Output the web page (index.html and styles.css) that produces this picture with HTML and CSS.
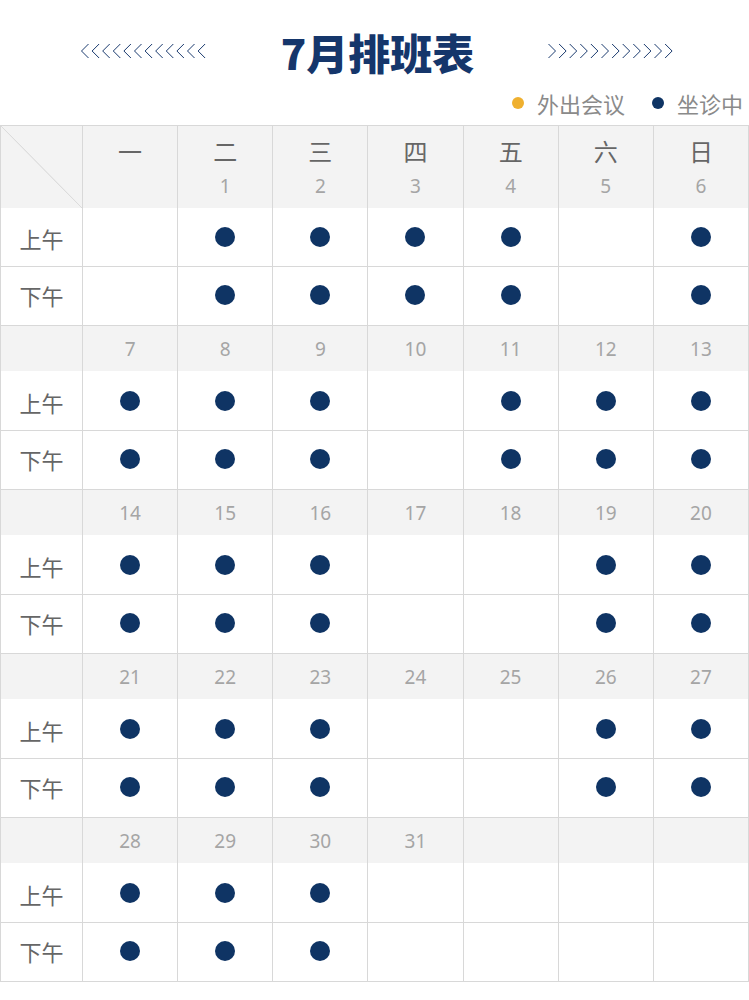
FILE: index.html
```html
<!DOCTYPE html>
<html lang="zh-CN">
<head>
<meta charset="utf-8">
<link rel="stylesheet" href="styles.css">
<title>7月排班表</title>
</head>
<body>
<div class="page">
  <header class="top">
    <svg class="chev" width="126" height="16" viewBox="0 0 126 16">
      <g fill="none" stroke="#1a3a6e" stroke-width="1">
        <polyline points="7.5,1 0.5,8 7.5,15"/>
        <polyline points="18.1,1 11.1,8 18.1,15"/>
        <polyline points="28.7,1 21.7,8 28.7,15"/>
        <polyline points="39.3,1 32.3,8 39.3,15"/>
        <polyline points="49.9,1 42.9,8 49.9,15"/>
        <polyline points="60.5,1 53.5,8 60.5,15"/>
        <polyline points="71.1,1 64.1,8 71.1,15"/>
        <polyline points="81.7,1 74.7,8 81.7,15"/>
        <polyline points="92.3,1 85.3,8 92.3,15"/>
        <polyline points="102.9,1 95.9,8 102.9,15"/>
        <polyline points="113.5,1 106.5,8 113.5,15"/>
        <polyline points="124.1,1 117.1,8 124.1,15"/>
      </g>
    </svg>
    <h1 class="title">7月排班表</h1>
    <svg class="chev" width="126" height="16" viewBox="0 0 126 16">
      <g fill="none" stroke="#1a3a6e" stroke-width="1">
        <polyline points="0.5,1 7.5,8 0.5,15"/>
        <polyline points="11.1,1 18.1,8 11.1,15"/>
        <polyline points="21.7,1 28.7,8 21.7,15"/>
        <polyline points="32.3,1 39.3,8 32.3,15"/>
        <polyline points="42.9,1 49.9,8 42.9,15"/>
        <polyline points="53.5,1 60.5,8 53.5,15"/>
        <polyline points="64.1,1 71.1,8 64.1,15"/>
        <polyline points="74.7,1 81.7,8 74.7,15"/>
        <polyline points="85.3,1 92.3,8 85.3,15"/>
        <polyline points="95.9,1 102.9,8 95.9,15"/>
        <polyline points="106.5,1 113.5,8 106.5,15"/>
        <polyline points="117.1,1 124.1,8 117.1,15"/>
      </g>
    </svg>
  </header>

  <div class="legend">
    <span class="legend-item"><i class="ldot ldot-out"></i>外出会议</span>
    <span class="legend-item"><i class="ldot ldot-in"></i>坐诊中</span>
  </div>

  <div class="grid">
    <!-- header row -->
    <div class="cell head corner"></div>
    <div class="cell head"><span class="wd">一</span><span class="dn">&nbsp;</span></div>
    <div class="cell head"><span class="wd">二</span><span class="dn">1</span></div>
    <div class="cell head"><span class="wd">三</span><span class="dn">2</span></div>
    <div class="cell head"><span class="wd">四</span><span class="dn">3</span></div>
    <div class="cell head"><span class="wd">五</span><span class="dn">4</span></div>
    <div class="cell head"><span class="wd">六</span><span class="dn">5</span></div>
    <div class="cell head"><span class="wd">日</span><span class="dn">6</span></div>

    <div class="cell am label">上午</div>
    <div class="cell am"></div>
    <div class="cell am"><i class="dot"></i></div>
    <div class="cell am"><i class="dot"></i></div>
    <div class="cell am"><i class="dot"></i></div>
    <div class="cell am"><i class="dot"></i></div>
    <div class="cell am"></div>
    <div class="cell am"><i class="dot"></i></div>

    <div class="cell pm label">下午</div>
    <div class="cell pm"></div>
    <div class="cell pm"><i class="dot"></i></div>
    <div class="cell pm"><i class="dot"></i></div>
    <div class="cell pm"><i class="dot"></i></div>
    <div class="cell pm"><i class="dot"></i></div>
    <div class="cell pm"></div>
    <div class="cell pm"><i class="dot"></i></div>

    <!-- week 2 -->
    <div class="cell date"></div>
    <div class="cell date">7</div>
    <div class="cell date">8</div>
    <div class="cell date">9</div>
    <div class="cell date">10</div>
    <div class="cell date">11</div>
    <div class="cell date">12</div>
    <div class="cell date">13</div>

    <div class="cell am label">上午</div>
    <div class="cell am"><i class="dot"></i></div>
    <div class="cell am"><i class="dot"></i></div>
    <div class="cell am"><i class="dot"></i></div>
    <div class="cell am"></div>
    <div class="cell am"><i class="dot"></i></div>
    <div class="cell am"><i class="dot"></i></div>
    <div class="cell am"><i class="dot"></i></div>

    <div class="cell pm label">下午</div>
    <div class="cell pm"><i class="dot"></i></div>
    <div class="cell pm"><i class="dot"></i></div>
    <div class="cell pm"><i class="dot"></i></div>
    <div class="cell pm"></div>
    <div class="cell pm"><i class="dot"></i></div>
    <div class="cell pm"><i class="dot"></i></div>
    <div class="cell pm"><i class="dot"></i></div>

    <!-- week 3 -->
    <div class="cell date"></div>
    <div class="cell date">14</div>
    <div class="cell date">15</div>
    <div class="cell date">16</div>
    <div class="cell date">17</div>
    <div class="cell date">18</div>
    <div class="cell date">19</div>
    <div class="cell date">20</div>

    <div class="cell am label">上午</div>
    <div class="cell am"><i class="dot"></i></div>
    <div class="cell am"><i class="dot"></i></div>
    <div class="cell am"><i class="dot"></i></div>
    <div class="cell am"></div>
    <div class="cell am"></div>
    <div class="cell am"><i class="dot"></i></div>
    <div class="cell am"><i class="dot"></i></div>

    <div class="cell pm label">下午</div>
    <div class="cell pm"><i class="dot"></i></div>
    <div class="cell pm"><i class="dot"></i></div>
    <div class="cell pm"><i class="dot"></i></div>
    <div class="cell pm"></div>
    <div class="cell pm"></div>
    <div class="cell pm"><i class="dot"></i></div>
    <div class="cell pm"><i class="dot"></i></div>

    <!-- week 4 -->
    <div class="cell date"></div>
    <div class="cell date">21</div>
    <div class="cell date">22</div>
    <div class="cell date">23</div>
    <div class="cell date">24</div>
    <div class="cell date">25</div>
    <div class="cell date">26</div>
    <div class="cell date">27</div>

    <div class="cell am label">上午</div>
    <div class="cell am"><i class="dot"></i></div>
    <div class="cell am"><i class="dot"></i></div>
    <div class="cell am"><i class="dot"></i></div>
    <div class="cell am"></div>
    <div class="cell am"></div>
    <div class="cell am"><i class="dot"></i></div>
    <div class="cell am"><i class="dot"></i></div>

    <div class="cell pm label">下午</div>
    <div class="cell pm"><i class="dot"></i></div>
    <div class="cell pm"><i class="dot"></i></div>
    <div class="cell pm"><i class="dot"></i></div>
    <div class="cell pm"></div>
    <div class="cell pm"></div>
    <div class="cell pm"><i class="dot"></i></div>
    <div class="cell pm"><i class="dot"></i></div>

    <!-- week 5 -->
    <div class="cell date"></div>
    <div class="cell date">28</div>
    <div class="cell date">29</div>
    <div class="cell date">30</div>
    <div class="cell date">31</div>
    <div class="cell date"></div>
    <div class="cell date"></div>
    <div class="cell date"></div>

    <div class="cell am label">上午</div>
    <div class="cell am"><i class="dot"></i></div>
    <div class="cell am"><i class="dot"></i></div>
    <div class="cell am"><i class="dot"></i></div>
    <div class="cell am"></div>
    <div class="cell am"></div>
    <div class="cell am"></div>
    <div class="cell am"></div>

    <div class="cell pm label">下午</div>
    <div class="cell pm"><i class="dot"></i></div>
    <div class="cell pm"><i class="dot"></i></div>
    <div class="cell pm"><i class="dot"></i></div>
    <div class="cell pm"></div>
    <div class="cell pm"></div>
    <div class="cell pm"></div>
    <div class="cell pm"></div>
  </div>
</div>
</body>
</html>
```

FILE: styles.css
```css
* {
  box-sizing: border-box;
}

html, body {
  margin: 0;
  padding: 0;
  background: #ffffff;
}

body {
  font-family: "Noto Sans", "Noto Sans CJK SC", sans-serif;
  color: #666666;
}

.page {
  width: 749px;
}

.top {
  height: 74px;
  padding-top: 30px;
  padding-left: 6px;
  display: flex;
  align-items: center;
  justify-content: center;
  gap: 74px;
}

.chev {
  display: block;
  flex: none;
  margin-top: -2px;
}

.title {
  margin: 0;
  font-family: "Noto Sans CJK SC", sans-serif;
  font-weight: 900;
  font-size: 42px;
  line-height: 44px;
  color: #15366b;
  letter-spacing: 0;
}

.legend {
  margin-top: 18px;
  height: 22px;
  margin-bottom: 11px;
  display: flex;
  justify-content: flex-end;
  align-items: center;
  gap: 27px;
  padding-right: 6px;
}

.legend-item {
  display: flex;
  align-items: center;
  gap: 13px;
  font-family: "Noto Sans CJK SC", sans-serif;
  font-size: 22px;
  line-height: 22px;
  color: #8a8a8a;
}

.ldot {
  display: block;
  width: 12px;
  height: 12px;
  border-radius: 50%;
}

.ldot-out {
  background: #efb02f;
}

.ldot-in {
  background: #0f3464;
}

.grid {
  width: 749px;
  display: grid;
  grid-template-columns: 82px repeat(7, 1fr);
  grid-template-rows: 83px 58px 59px repeat(4, 46px 59px 59px);
  border-right: 1px solid #d8d8d8;
  border-bottom: 1px solid #d8d8d8;
}

.cell {
  border-left: 1px solid #d8d8d8;
  display: flex;
  align-items: center;
  justify-content: center;
  background: #ffffff;
}

.head {
  border-top: 1px solid #d8d8d8;
  background: #f3f3f3;
  flex-direction: column;
  justify-content: flex-start;
  padding-top: 10px;
}

.corner {
  background:
    linear-gradient(to top right, transparent calc(50% - 0.7px), #dcdcdc calc(50% - 0.2px), #dcdcdc calc(50% + 0.2px), transparent calc(50% + 0.7px)),
    #f3f3f3;
}

.wd {
  font-family: "Noto Sans CJK SC", sans-serif;
  font-size: 24px;
  line-height: 30px;
  color: #666666;
}

.dn {
  font-size: 19px;
  line-height: 24px;
  margin-top: 8px;
  color: #a5a5a5;
}

.pm {
  border-top: 1px solid #d8d8d8;
  padding-bottom: 2px;
}

.date {
  border-top: 1px solid #d8d8d8;
  background: #f3f3f3;
  font-size: 19px;
  color: #a5a5a5;
  padding-top: 0;
}

.label {
  font-family: "Noto Sans CJK SC", sans-serif;
  font-size: 22px;
  color: #666666;
  padding-top: 2px;
}

.label.pm {
  padding-top: 0;
}

.dot {
  display: block;
  width: 20px;
  height: 20px;
  border-radius: 50%;
  background: #0f3464;
}
```
